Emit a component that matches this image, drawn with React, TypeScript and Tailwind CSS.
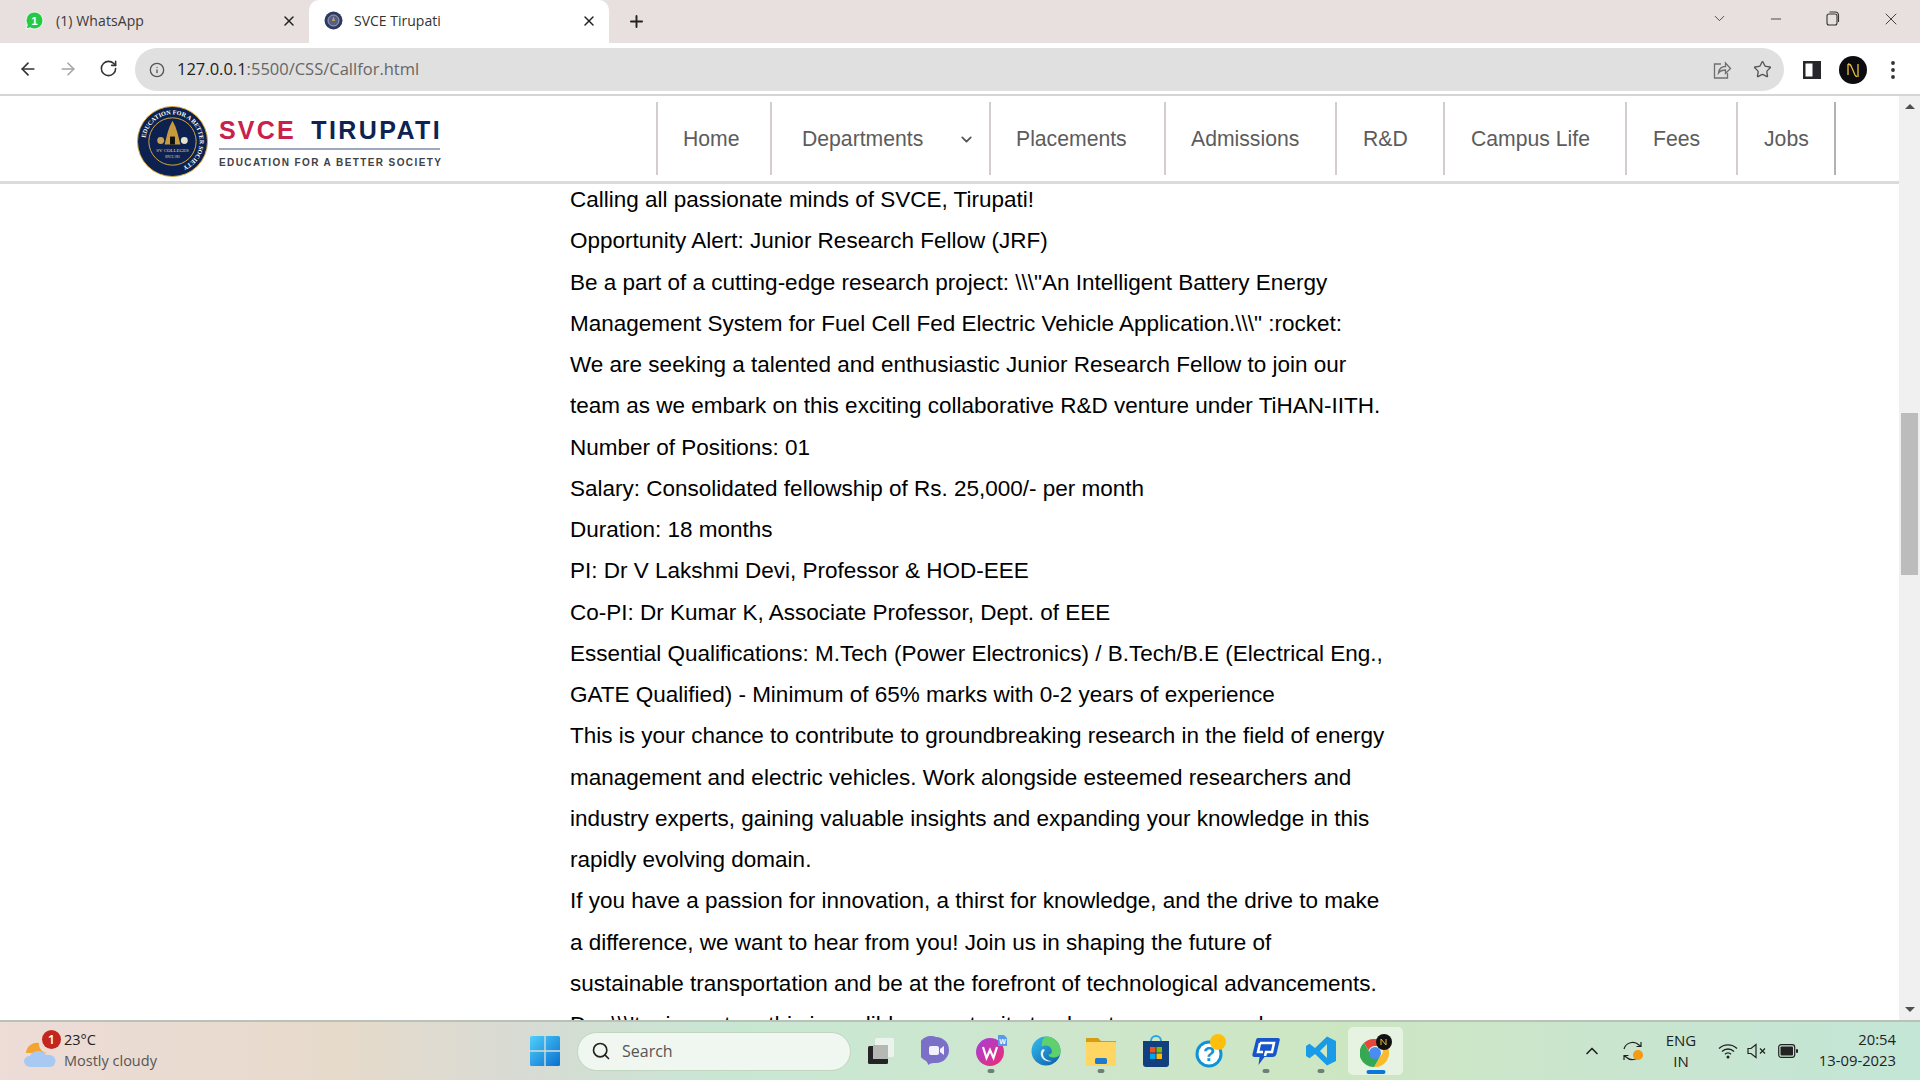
import React from "react";
import { ArrowLeft, ArrowRight, RotateCw, Info, Star, X, Plus, ChevronDown, Minus, Search, ChevronUp } from "lucide-react";

const ui = "font-['Open_Sans','Noto_Sans',sans-serif]";

function Seal({ size }: { size: number }) {
  return (
    <svg width={size} height={size} viewBox="0 0 72 72" className="shrink-0">
      <defs>
        <path id="sealArc" d="M36 36 m-27.5 0 a27.5 27.5 0 1 1 55 0 a27.5 27.5 0 1 1 -55 0" />
      </defs>
      <circle cx="36" cy="36" r="35.5" fill="#0c2150" stroke="#d9a93c" strokeWidth="1" />
      <circle cx="36" cy="36" r="24" fill="#0c2150" stroke="#d9a93c" strokeWidth="1" />
      <text fontSize="6.3" fill="#fff" fontFamily="Liberation Serif, serif" fontWeight="700">
        <textPath href="#sealArc" startOffset="2%">EDUCATION FOR A BETTER SOCIETY</textPath>
      </text>
      <path d="M36 15 l3 6 l2 6 l3 12 h-16 l3 -12 l2 -6 z" fill="#c79a3b" />
      <rect x="33.500" y="31" width="5" height="8" fill="#111" />
      <circle cx="24" cy="35" r="3.5" fill="#c9a35a" />
      <circle cx="48" cy="35" r="3.5" fill="#e6e0cf" />
      <text x="36" y="47" textAnchor="middle" fontSize="5" fill="#e8d9a8" fontFamily="Liberation Serif, serif">SV COLLEGES</text>
      <text x="36" y="53" textAnchor="middle" fontSize="3" fill="#e8d9a8" fontFamily="Liberation Serif, serif">SINCE 1981</text>
    </svg>
  );
}

function Logo() {
  return (
    <div className="flex items-center ml-[137px] w-[519px] shrink-0 pt-[5px]">
      <Seal size={71} />
      <div className="ml-[11px] w-[221px] pt-[2px] font-['Liberation_Sans',sans-serif]">
        <div className="flex justify-between text-[25px] leading-[30px] font-bold whitespace-nowrap">
          <span className="text-[#c9204d] tracking-[2.2px]">SVCE</span>
          <span className="text-[#0e2352] tracking-[2.4px] mr-[-2px]">TIRUPATI</span>
        </div>
        <div className="h-[2px] bg-[#9ea9c0] mt-[3px]" />
        <div className="mt-[7px] text-[10px] leading-[12px] font-bold text-[#3f4146] tracking-[1.4px] whitespace-nowrap">EDUCATION FOR A BETTER SOCIETY</div>
      </div>
    </div>
  );
}

const navItems = [
  { label: "Home", w: "w-[114px]", pl: "pl-[25px]" },
  { label: "Departments", w: "w-[219px]", pl: "pl-[30px]", chevron: true },
  { label: "Placements", w: "w-[175px]", pl: "pl-[25px]" },
  { label: "Admissions", w: "w-[171px]", pl: "pl-[25px]" },
  { label: "R&D", w: "w-[108px]", pl: "pl-[26px]" },
  { label: "Campus Life", w: "w-[182px]", pl: "pl-[26px]" },
  { label: "Fees", w: "w-[111px]", pl: "pl-[26px]" },
  { label: "Jobs", w: "w-[98px]", pl: "pl-[26px]" },
];

function Nav() {
  return (
    <div className="flex h-[88px] items-start border-b-[3px] border-[#dedad8] bg-white">
      <div className="flex h-[85px] items-center">
        <Logo />
        <div className="flex h-[73px] font-['Liberation_Sans',sans-serif] text-[21.2px] text-[#5c5c5c]">
          {navItems.map((n) => (
            <div key={n.label} className={`flex items-center border-l-2 border-[#d3cdcd] ${n.w} ${n.pl} relative`}>
              <span>{n.label}</span>
              {n.chevron && <ChevronDown size={17} strokeWidth={2.5} className="absolute right-[14px] top-[29px] text-[#555]" />}
            </div>
          ))}
          <div className="border-l-2 border-[#b5b1b1]" />
        </div>
      </div>
    </div>
  );
}

const paragraphs = [
  "Calling all passionate minds of SVCE, Tirupati!",
  "Opportunity Alert: Junior Research Fellow (JRF)",
  'Be a part of a cutting-edge research project: \\\\\\"An Intelligent Battery Energy Management System for Fuel Cell Fed Electric Vehicle Application.\\\\\\" :rocket:',
  "We are seeking a talented and enthusiastic Junior Research Fellow to join our team as we embark on this exciting collaborative R&D venture under TiHAN-IITH.",
  "Number of Positions: 01",
  "Salary: Consolidated fellowship of Rs. 25,000/- per month",
  "Duration: 18 months",
  "PI: Dr V Lakshmi Devi, Professor & HOD-EEE",
  "Co-PI: Dr Kumar K, Associate Professor, Dept. of EEE",
  "Essential Qualifications: M.Tech (Power Electronics) / B.Tech/B.E (Electrical Eng., GATE Qualified) - Minimum of 65% marks with 0-2 years of experience",
  "This is your chance to contribute to groundbreaking research in the field of energy management and electric vehicles. Work alongside esteemed researchers and industry experts, gaining valuable insights and expanding your knowledge in this rapidly evolving domain.",
  "If you have a passion for innovation, a thirst for knowledge, and the drive to make a difference, we want to hear from you! Join us in shaping the future of sustainable transportation and be at the forefront of technological advancements.",
  "Don\\\\\\'t miss out on this incredible opportunity to elevate your research career",
];

function TabBar() {
  return (
    <div className={`flex h-[43px] bg-[#e8dfdf] ${ui} text-[14px]`}>
      <div className="flex w-[309px] items-center pl-[25px] pr-[12px] pb-[2px] text-[#3a3a3a]">
        <svg width="19" height="19" viewBox="0 0 18 18" className="shrink-0">
          <path d="M9 1a8 8 0 0 0-6.8 12.2L1 17l3.9-1.1A8 8 0 1 0 9 1z" fill="#25c944" stroke="#fff" strokeWidth="0.8" />
          <text x="9" y="13" textAnchor="middle" fontSize="11" fontWeight="700" fill="#fff" fontFamily="Liberation Sans, sans-serif">1</text>
        </svg>
        <span className="ml-[12px] tracking-[0.1px]">(1) WhatsApp</span>
        <X size={16} strokeWidth={2.2} className="ml-auto text-[#222]" />
      </div>
      <div className="flex w-[300px] items-center rounded-t-[10px] bg-white pl-[15px] pr-[12px] pb-[2px] text-[#333]">
        <svg width="19" height="19" viewBox="0 0 19 19" className="shrink-0">
          <circle cx="9.5" cy="9.5" r="9" fill="#2c3a63" />
          <circle cx="9.5" cy="9.5" r="5.5" fill="#55608a" stroke="#a8a8b0" strokeWidth="1" />
          <path d="M9.5 5.5l1.5 4.5h-3z" fill="#c9a84e" />
        </svg>
        <span className="ml-[11px]">SVCE Tirupati</span>
        <X size={16} strokeWidth={2.2} className="ml-auto text-[#222]" />
      </div>
      <div className="flex items-center pl-[18px]">
        <Plus size={19} strokeWidth={2.4} className="text-[#222]" />
      </div>
      <div className="ml-auto flex items-center pb-[6px] text-[#333]">
        <ChevronDown size={17} strokeWidth={1.2} className="mr-[40px]" />
        <Minus size={16} strokeWidth={1.3} className="mr-[42px]" />
        <svg width="14" height="15" viewBox="0 0 14 15" fill="none" stroke="#333" strokeWidth="1.1" className="mr-[41px]">
          <rect x="1" y="3" width="10" height="11" rx="2" />
          <path d="M3.5 1h6a3 3 0 0 1 3 3v7" />
        </svg>
        <X size={20} strokeWidth={1.1} className="mr-[19px]" />
      </div>
    </div>
  );
}

function ToolBar() {
  return (
    <div className="flex h-[53px] items-start border-b-2 border-[#d8d4d4] bg-white pt-[5px]">
      <div className="flex h-[43px] items-center pl-[18px] pb-[2px] text-[#333]">
        <ArrowLeft size={20} strokeWidth={2} />
        <ArrowRight size={20} strokeWidth={1.8} className="ml-[20px] text-[#a3a3a3]" />
        <RotateCw size={19} strokeWidth={2} className="ml-[21px]" />
      </div>
      <div className="ml-[17px] flex h-[43px] w-[1649px] items-center rounded-full bg-[#e0e0e0] pl-[14px] pr-[11px]">
        <Info size={16} strokeWidth={2} className="text-[#555]" />
        <span className={`ml-[12px] text-[16.5px] ${ui}`}>
          <span className="text-[#222]">127.0.0.1</span>
          <span className="text-[#666]">:5500/CSS/Callfor.html</span>
        </span>
        <svg width="20" height="20" viewBox="0 0 20 20" fill="none" stroke="#6f6f6f" strokeWidth="1.3" className="ml-auto">
          <path d="M9 4H2.5v14h13v-5" />
          <path d="M6.5 13c.5-4 3-6.500 7-6.500V3l5 5.500-5 5V10c-3 0-5.500 1-7 3z" />
        </svg>
        <Star size={19} strokeWidth={1.7} className="ml-[21px] mr-[1px] text-[#555]" />
      </div>
      <div className="flex h-[43px] items-center">
        <svg width="18" height="18" viewBox="0 0 18 18" className="ml-[19px]">
          <path fillRule="evenodd" d="M0 0h18v18H0zM2.500 2.500v13h7v-13z" fill="#26262b" />
        </svg>
        <svg width="28" height="28" viewBox="0 0 28 28" className="ml-[18px]">
          <circle cx="14" cy="14" r="14" fill="#0c0c10" />
          <path d="M9 8c2 0 3 1 4 4l3 7c.5 1 1 1.500 2 1.500M19 8v13M9 8v11" stroke="#e6bd3f" strokeWidth="1.3" fill="none" />
        </svg>
        <svg width="4" height="18" viewBox="0 0 4 18" className="ml-[24px]" fill="#333">
          <circle cx="2" cy="2" r="1.900" />
          <circle cx="2" cy="9" r="1.900" />
          <circle cx="2" cy="16" r="1.900" />
        </svg>
      </div>
    </div>
  );
}

function Scrollbar() {
  return (
    <div className="flex w-[21px] shrink-0 flex-col items-center bg-[#f0f0f0] py-[8px]">
      <div className="h-0 w-0 border-x-[5px] border-b-[5px] border-x-transparent border-b-[#505050]" />
      <div className="mt-[304px] h-[162px] w-[17px] bg-[#bcbcbc]" />
      <div className="mt-auto h-0 w-0 border-x-[5px] border-t-[5px] border-x-transparent border-t-[#505050]" />
    </div>
  );
}

const Dot = () => <span className="absolute bottom-[2px] left-1/2 h-[4px] w-[7px] -translate-x-1/2 rounded-full bg-[#6f7f78]" />;

function TaskIcon({ children, dot, active }: { children: React.ReactNode; dot?: boolean; active?: boolean }) {
  return (
    <div className={`relative flex h-[48px] w-[55px] items-center justify-center rounded-[5px] ${active ? "bg-white/50" : ""}`}>
      {children}
      {dot && <Dot />}
      {active && <span className="absolute bottom-[1px] left-1/2 h-[4px] w-[19px] -translate-x-1/2 rounded-full bg-[#0a78d6]" />}
    </div>
  );
}

function Taskbar() {
  return (
    <div className={`flex h-[60px] shrink-0 items-center border-t-2 border-[#b9c2b8] bg-[linear-gradient(90deg,#eddcd7_0%,#e6dacb_18%,#d8dbd4_27%,#c8e7d3_38%,#cde7d0_50%,#cde6c2_70%,#c9e5cf_85%,#c3e6d6_100%)] ${ui}`}>
      <div className="flex w-[530px] shrink-0 items-center pl-[24px]">
        <div className="relative h-[40px] w-[34px] shrink-0">
          <svg width="34" height="40" viewBox="0 0 34 40">
            <path d="M2 22a11 11 0 0 1 13-10 9 9 0 0 0 10 10z" fill="#f2a531" />
            <path d="M7 36c-9 0-9-11-1-11 2-6 13-7 16-1 7-1 11 4 9 8-1 3-3 4-6 4z" fill="#a8c9f2" />
          </svg>
          <span className="absolute right-[-3px] top-[-1px] flex h-[19px] w-[19px] items-center justify-center rounded-full bg-[#c4261d] text-[13px] font-semibold leading-none text-white">1</span>
        </div>
        <div className="ml-[6px] mt-[-3px] text-[14.5px] leading-[21px]">
          <div className="text-[#222]">23°C</div>
          <div className="text-[#555]">Mostly cloudy</div>
        </div>
      </div>
      <svg width="30" height="30" viewBox="0 0 30 30" className="shrink-0">
        <defs>
          <linearGradient id="win" x1="0" y1="0" x2="1" y2="1">
            <stop offset="0" stopColor="#4fd0fb" />
            <stop offset="1" stopColor="#0a6fcf" />
          </linearGradient>
        </defs>
        <path d="M0 1.500A1.500 1.500 0 0 1 1.500 0h12.800v14.300H0zM15.700 0h12.800A1.500 1.500 0 0 1 30 1.500v12.800H15.700zM0 15.700h14.300V30H1.500A1.500 1.500 0 0 1 0 28.500zM15.700 15.700H30v12.800a1.500 1.500 0 0 1-1.500 1.500H15.700z" fill="url(#win)" />
      </svg>
      <div className="ml-[17px] flex h-[39px] w-[274px] shrink-0 items-center rounded-full border border-[#c0d4c0] bg-[#eff7f0] pl-[13px] text-[16px] text-[#555]">
        <Search size={20} strokeWidth={2} className="text-[#222]" />
        <span className="ml-[11px]">Search</span>
      </div>
      <div className="ml-[2px] flex items-center">
        <TaskIcon>
          <svg width="28" height="26" viewBox="0 0 28 26">
            <rect x="1" y="8" width="20" height="18" rx="1.500" fill="#242424" />
            <rect x="8" y="0" width="19" height="19" rx="1.500" fill="#f2f4f1" fillOpacity="0.85" />
            <rect x="6" y="7" width="15" height="14" fill="#b5b8b5" />
          </svg>
        </TaskIcon>
        <TaskIcon>
          <svg width="30" height="30" viewBox="0 0 30 30">
            <path d="M15 1a13 13 0 0 1 0 26c-3 0-5 0-8 2 0-2-1-3-2-4A13 13 0 0 1 15 1z" fill="#7a70c8" />
            <rect x="8" y="10" width="10" height="9" rx="2" fill="#f3f1ff" />
            <path d="M19 13l4-3v9l-4-3z" fill="#f3f1ff" />
          </svg>
        </TaskIcon>
        <TaskIcon dot>
          <svg width="32" height="32" viewBox="0 0 32 32">
            <defs>
              <linearGradient id="wg" x1="0" y1="0" x2="1" y2="1">
                <stop offset="0" stopColor="#a23fe0" />
                <stop offset="1" stopColor="#f02c6e" />
              </linearGradient>
            </defs>
            <path d="M15 3c8 0 14 6 14 14 0 7-6 14-14 14S1 24 1 17 7 3 15 3z" fill="url(#wg)" />
            <path d="M8 12l3.500 11 3.500-8 3.500 8L22 12" stroke="#fff" strokeWidth="2.200" fill="none" />
            <path d="M23 0h6l3 3v8h-9z" fill="#5a9ae8" />
            <text x="27.500" y="9" textAnchor="middle" fontSize="7" fill="#fff" fontFamily="Liberation Sans, sans-serif" fontWeight="700">W</text>
          </svg>
        </TaskIcon>
        <TaskIcon>
          <svg width="30" height="30" viewBox="0 0 30 30">
            <defs>
              <linearGradient id="eg" x1="0" y1="0" x2="1" y2="1">
                <stop offset="0" stopColor="#35c1f1" />
                <stop offset="1" stopColor="#0c59a4" />
              </linearGradient>
            </defs>
            <circle cx="15" cy="15" r="14.500" fill="url(#eg)" />
            <path d="M15 .5a14.500 14.500 0 0 1 14.500 15c0 4-3 6-7 6-3 0-5-1-5-3 3 0 4-2 3-5-1-4-6-5-10-3C11 3 13 1 15 .5z" fill="#5ed16d" />
            <path d="M12 13c-3 2-3 7 0 10 2 2 6 3 9 2-5 0-9-3-9-7 0-2 1-3 2-4z" fill="#e6f4fb" />
          </svg>
        </TaskIcon>
        <TaskIcon dot>
          <svg width="30" height="30" viewBox="0 0 30 30">
            <path d="M0 2h12l3 3h15v4H0z" fill="#d69d12" />
            <rect x="0" y="6" width="30" height="24" rx="1" fill="#fdd663" />
            <rect x="9" y="22" width="12" height="6" rx="1.500" fill="#1c7ad0" />
          </svg>
        </TaskIcon>
        <TaskIcon>
          <svg width="28" height="32" viewBox="0 0 28 32">
            <path d="M9 6a5 5 0 0 1 10 0" stroke="#2aa6e0" strokeWidth="2" fill="none" />
            <path d="M1 6h26v23a3 3 0 0 1-3 3H4a3 3 0 0 1-3-3z" fill="#123f7d" />
            <rect x="8" y="12" width="5.500" height="5.500" fill="#f25022" />
            <rect x="14.500" y="12" width="5.500" height="5.500" fill="#7fba00" />
            <rect x="8" y="18.500" width="5.500" height="5.500" fill="#00a4ef" />
            <rect x="14.500" y="18.500" width="5.500" height="5.500" fill="#ffb900" />
          </svg>
        </TaskIcon>
        <TaskIcon>
          <svg width="32" height="34" viewBox="0 0 32 34">
            <circle cx="14" cy="20" r="13.500" fill="#1093d6" />
            <circle cx="14" cy="20" r="10.500" fill="#fff" />
            <text x="14" y="27" textAnchor="middle" fontSize="20" fontWeight="700" fill="#1093d6" fontFamily="Liberation Sans, sans-serif">?</text>
            <circle cx="23" cy="8" r="8" fill="#fcc00c" />
          </svg>
        </TaskIcon>
        <TaskIcon dot>
          <svg width="28" height="30" viewBox="0 0 28 30">
            <path d="M6 2h20c2 0 2 2 1.500 3l-3 13c-.5 2-2 3-4 3h-8l-6 8 1-8H3c-2 0-3-1-2.500-3L4 4c.3-1.200 1-2 2-2z" fill="#1656c9" />
            <path d="M8 7h14l-2 9h-6l-1 4" stroke="#fff" strokeWidth="2.500" fill="none" />
            <path d="M8 7l-2 9h5" stroke="#fff" strokeWidth="2.500" fill="none" />
          </svg>
        </TaskIcon>
        <TaskIcon dot>
          <svg width="30" height="30" viewBox="0 0 30 30">
            <path d="M21 .5L30 5v20l-9 4.500-12-11.500-5.500 4.200L0 20v-10l3.500-2.200L9 12zM21 8l-7 7 7 7z" fill="#1a9be8" fillRule="evenodd" />
          </svg>
        </TaskIcon>
        <TaskIcon active>
          <svg width="32" height="34" viewBox="0 0 32 34">
            <path d="M15 5a14 14 0 0 1 12.100 7H15a7 7 0 0 0-6.500 4.500L4 8.800A14 14 0 0 1 15 5z" fill="#e8453c" />
            <path d="M27.100 12a14 14 0 0 1-13 21l6-10.500A7 7 0 0 0 21 12z" fill="#f9bb2d" />
            <path d="M14.100 33A14 14 0 0 1 4 8.800l6 10.500a7 7 0 0 0 10 3.200z" fill="#34a853" />
            <circle cx="15" cy="19" r="6" fill="#4b8bf5" />
            <circle cx="24" cy="8" r="8" fill="#111" />
            <path d="M21 5l5 6M21 5v6M26 5v6" stroke="#e0b93e" strokeWidth="1" fill="none" />
          </svg>
        </TaskIcon>
      </div>
      <div className="ml-[179px] flex items-center text-[#222]">
        <ChevronUp size={20} strokeWidth={2} />
        <svg width="22" height="22" viewBox="0 0 22 22" fill="none" stroke="#222" strokeWidth="1.200" className="ml-[20px]">
          <path d="M2 9a9 9 0 0 1 15-4l2 1.500M19 2v4.500h-4.500" />
          <path d="M19 13a9 9 0 0 1-15 4l-2-1.500M2 20v-4.500h4.500" />
          <circle cx="16" cy="15" r="5" fill="#f59a13" stroke="none" />
        </svg>
        <div className="ml-[17px] w-[40px] text-center text-[15px] leading-[21px]">
          <div>ENG</div>
          <div>IN</div>
        </div>
        <svg width="20" height="16" viewBox="0 0 20 16" fill="none" stroke="#222" strokeWidth="1.300" className="ml-[17px]">
          <path d="M1 5.500a13 13 0 0 1 18 0M4 8.500a8.500 8.500 0 0 1 12 0M7 11.200a4 4 0 0 1 6 0" />
          <circle cx="10" cy="14" r="1.500" fill="#222" stroke="none" />
        </svg>
        <svg width="20" height="16" viewBox="0 0 20 16" fill="none" stroke="#222" strokeWidth="1.200" className="ml-[9px]">
          <path d="M1 5.500h3L9 1.500v13L4 10.500H1z" />
          <path d="M13 5.500l5 5M18 5.500l-5 5" />
        </svg>
        <svg width="20" height="14" viewBox="0 0 20 14" className="ml-[11px]">
          <rect x="0.700" y="0.700" width="16" height="12.600" rx="2.500" fill="none" stroke="#222" strokeWidth="1.200" />
          <rect x="2.500" y="2.500" width="12.500" height="9" rx="1" fill="#222" />
          <rect x="18" y="5" width="2" height="4" rx="1" fill="#222" />
        </svg>
        <div className="ml-[10px] mt-[-2px] w-[88px] text-right text-[14.8px] leading-[21px]">
          <div>20:54</div>
          <div>13-09-2023</div>
        </div>
      </div>
    </div>
  );
}

export default function App() {
  return (
    <div className="flex h-screen w-[1920px] flex-col overflow-hidden bg-white">
      <TabBar />
      <ToolBar />
      <div className="flex min-h-0 flex-1">
        <div className="flex min-w-0 flex-1 flex-col overflow-hidden">
          <Nav />
          <div className="min-h-0 flex-1 overflow-hidden">
            <div className="-mt-[5px] ml-[570px] w-[820px] font-['Liberation_Sans',sans-serif] text-[22.5px] leading-[41.25px] text-black">
              {paragraphs.map((p, i) => (
                <p key={i}>{p}</p>
              ))}
            </div>
          </div>
        </div>
        <Scrollbar />
      </div>
      <Taskbar />
    </div>
  );
}
